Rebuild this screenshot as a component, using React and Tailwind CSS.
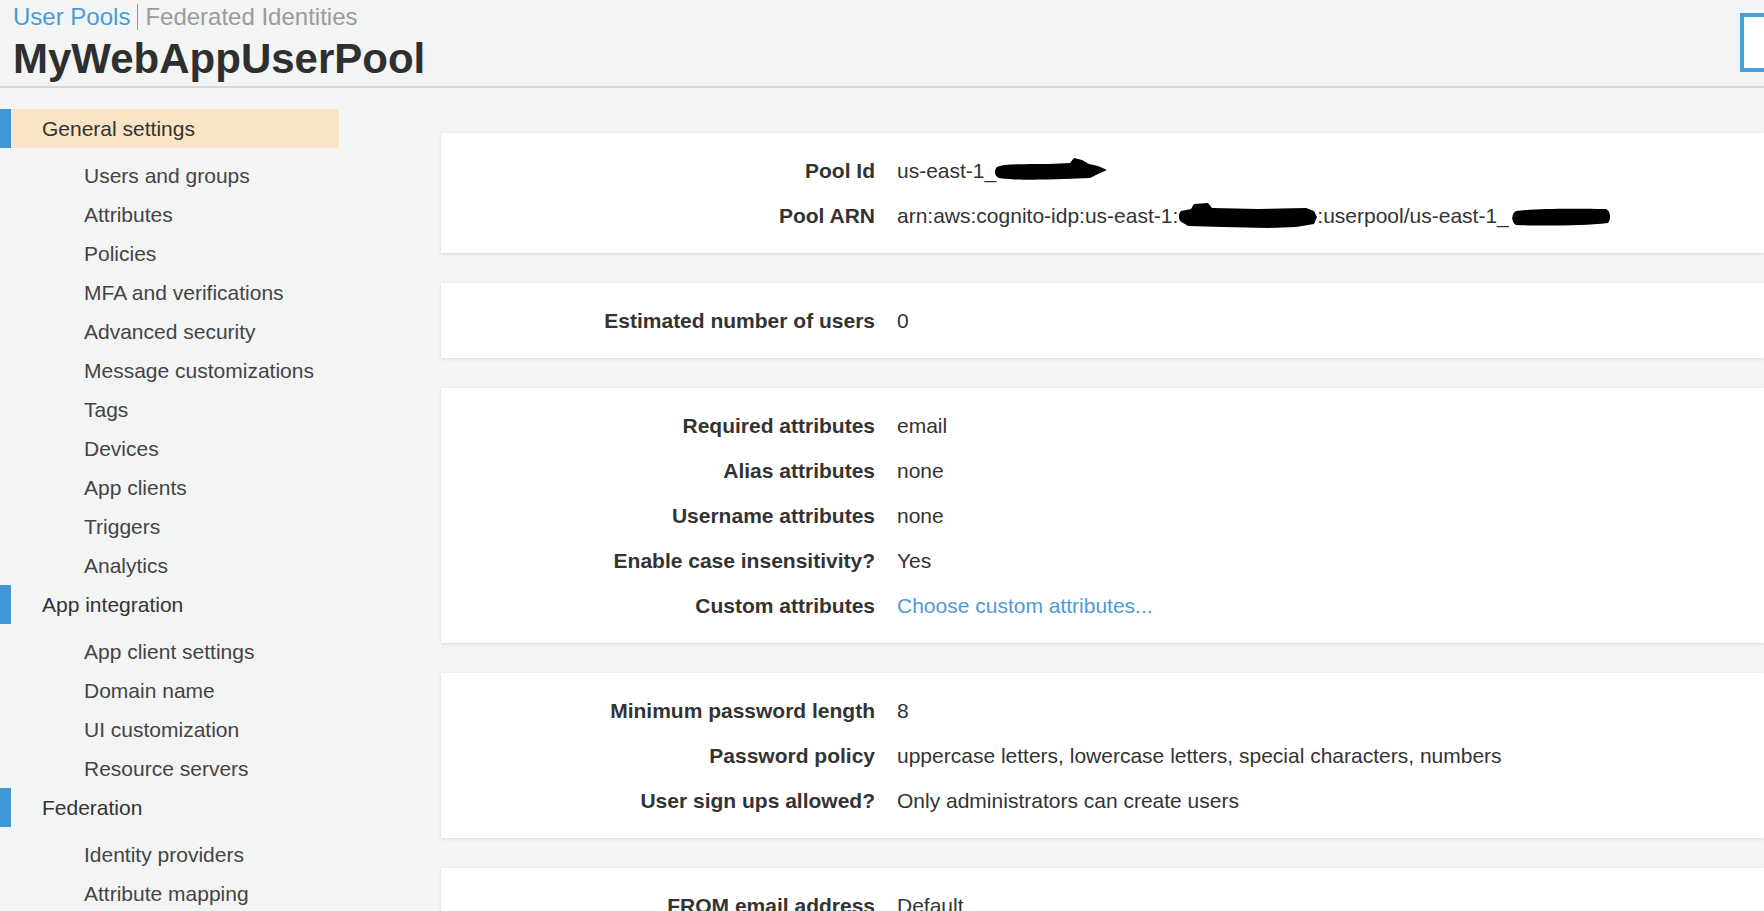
import React from 'react';

const sections = [
    {
        title: 'General settings',
        active: true,
        items: [
            'Users and groups',
            'Attributes',
            'Policies',
            'MFA and verifications',
            'Advanced security',
            'Message customizations',
            'Tags',
            'Devices',
            'App clients',
            'Triggers',
            'Analytics',
        ],
    },
    {
        title: 'App integration',
        items: ['App client settings', 'Domain name', 'UI customization', 'Resource servers'],
    },
    {
        title: 'Federation',
        items: ['Identity providers', 'Attribute mapping'],
    },
];

// black marker scribbles that hide the ids
const BlobId = () => (
    <svg width="113" height="23" viewBox="0 0 113 23" className="inline-block align-middle -ml-[2px] -mt-[6px]">
        <path
            d="M3 9 C8 6 30 6 55 6 L76 5 L80 0 L88 2 L95 6 L104 8 L113 12 L104 16 L96 20 L70 21 C45 22 15 22 5 20 C0 18 0 12 3 9 Z"
            fill="#000"
        />
    </svg>
);

const BlobAccount = () => (
    <svg width="139" height="26" viewBox="0 0 139 26" className="inline-block align-middle -mt-[2px]">
        <path
            d="M3 8 L13 6 L16 1 L30 0 L34 5 L80 6 L128 5 L136 8 L139 14 L136 21 L118 24 L90 25 L45 24 L10 23 L2 18 C0 14 1 10 3 8 Z"
            fill="#000"
        />
    </svg>
);

const BlobPool = () => (
    <svg width="100" height="18" viewBox="0 0 100 18" className="inline-block align-middle ml-[2px]">
        <path
            d="M5 3 C30 0 70 1 95 1 C100 3 100 12 97 15 C70 18 30 18 5 17 C0 14 0 6 5 3 Z"
            fill="#000"
        />
    </svg>
);

const Card = ({ rows }) => (
    <div className="bg-white shadow-[0_1px_3px_rgba(0,0,0,0.12)] py-[15px] mb-[30px]">
        {rows.map((row, i) => (
            <div key={i} className="flex items-center h-[45px] whitespace-nowrap">
                <div className="w-[434px] shrink-0 text-right font-bold text-[#333]">{row[0]}</div>
                <div className="ml-[22px] text-[#333]">{row[1]}</div>
            </div>
        ))}
    </div>
);

export default function App() {
    return (
        <div
            className="w-[1764px] h-[911px] overflow-hidden bg-[#f3f4f4] text-[21px]"
            style={{ fontFamily: '"Liberation Sans", Arial, sans-serif' }}
        >
            {/* header */}
            <div className="flex border-b-2 border-[#d6d7d7]">
                <div className="flex-1 pt-[3px] pl-[13px]">
                    <div className="flex items-center h-[28px] text-[24px]">
                        <span className="text-[#4a9cd6]">User Pools</span>
                        <span className="w-px h-[26px] bg-[#9a9a9a] ml-[7px] mr-[7px]" />
                        <span className="text-[#9b9b9b]">Federated Identities</span>
                    </div>
                    <div className="flex items-center h-[55px] text-[42px] font-bold text-[#2f2f2f]">MyWebAppUserPool</div>
                </div>
                <div className="w-[24px] h-[59px] mt-[13px] bg-white border-l-4 border-y-4 border-[#4a9fd8]" />
            </div>

            <div className="flex">
                {/* sidebar */}
                <div className="w-[339px] shrink-0 pt-[21px]">
                    {sections.map((s) => (
                        <div key={s.title}>
                            <div className={`flex items-center h-[39px] ${s.active ? 'bg-[#f9e4c5]' : ''}`}>
                                <div className="w-[11px] h-full bg-[#3f97d6]" />
                                <span className="ml-[31px] text-[#333]">{s.title}</span>
                            </div>
                            <div className="mt-[8px]">
                                {s.items.map((item) => (
                                    <div key={item} className="h-[39px] flex items-center pl-[84px] text-[#444]">
                                        {item}
                                    </div>
                                ))}
                            </div>
                        </div>
                    ))}
                </div>

                {/* main */}
                <div className="flex-1 pl-[102px] pt-[45px]">
                    <Card
                        rows={[
                            ['Pool Id', <span>us-east-1_<BlobId /></span>],
                            [
                                'Pool ARN',
                                <span>
                                    arn:aws:cognito-idp:us-east-1:<BlobAccount />:userpool/us-east-1_<BlobPool />
                                </span>,
                            ],
                        ]}
                    />
                    <Card rows={[['Estimated number of users', '0']]} />
                    <Card
                        rows={[
                            ['Required attributes', 'email'],
                            ['Alias attributes', 'none'],
                            ['Username attributes', 'none'],
                            ['Enable case insensitivity?', 'Yes'],
                            ['Custom attributes', <span className="text-[#4a9cd6]">Choose custom attributes...</span>],
                        ]}
                    />
                    <Card
                        rows={[
                            ['Minimum password length', '8'],
                            ['Password policy', 'uppercase letters, lowercase letters, special characters, numbers'],
                            ['User sign ups allowed?', 'Only administrators can create users'],
                        ]}
                    />
                    <Card rows={[['FROM email address', 'Default']]} />
                </div>
            </div>
        </div>
    );
}
